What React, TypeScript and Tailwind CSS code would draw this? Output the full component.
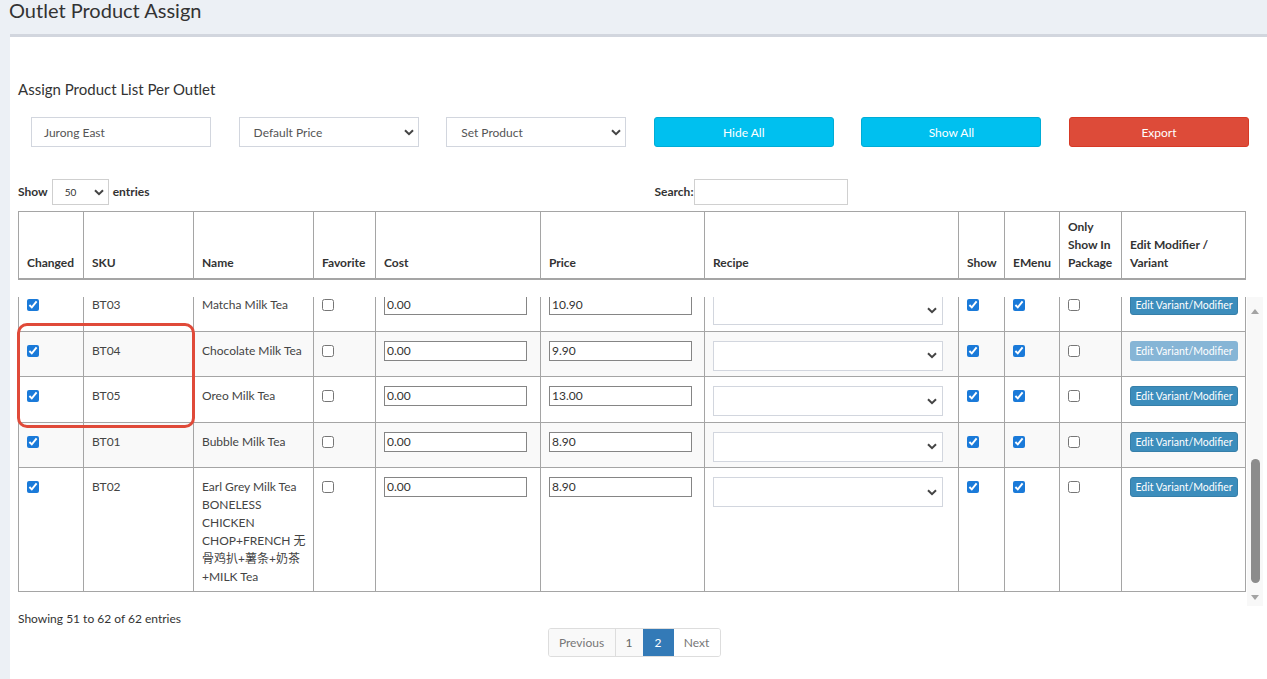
import React from 'react'

const cols =
  'grid grid-cols-[65px_110px_120px_62px_165px_164px_254px_46px_55px_62px_124px]'

const heads = ['Changed', 'SKU', 'Name', 'Favorite', 'Cost', 'Price', 'Recipe', 'Show', 'EMenu', 'Only Show In Package', 'Edit Modifier / Variant']

const rows = [
  { sku: 'BT03', name: ['Matcha Milk Tea'], price: '10.90', stripe: false, dim: false },
  { sku: 'BT04', name: ['Chocolate Milk Tea'], price: '9.90', stripe: true, dim: true },
  { sku: 'BT05', name: ['Oreo Milk Tea'], price: '13.00', stripe: false, dim: false },
  { sku: 'BT01', name: ['Bubble Milk Tea'], price: '8.90', stripe: true, dim: false },
  {
    sku: 'BT02',
    name: ['Earl Grey Milk Tea', 'BONELESS', 'CHICKEN', 'CHOP+FRENCH 无', '骨鸡扒+薯条+奶茶', '+MILK Tea'],
    price: '8.90',
    stripe: false,
    dim: false,
  },
]

function Chevron({ className = '' }: { className?: string }) {
  return (
    <svg viewBox="0 0 10 7" className={`h-[7px] w-[10px] ${className}`}>
      <path d="M1 1.2l4 4 4-4" fill="none" stroke="#444" strokeWidth="2" />
    </svg>
  )
}

function Box({ checked }: { checked: boolean }) {
  return (
    <div className="flex h-[18px] items-center">
      <input type="checkbox" defaultChecked={checked} className="m-0 h-[12px] w-[12px] accent-[#1a7ad9]" />
    </div>
  )
}

function Cell({ children, className = '' }: { children?: React.ReactNode; className?: string }) {
  return <div className={`border-b border-r border-[#a5a5a5] px-[8px] pb-[5px] pt-[10px] ${className}`}>{children}</div>
}

export default function App() {
  return (
    <div className="flex min-h-screen flex-col bg-[#ecf0f5] font-['Lato','Noto_Sans_CJK_SC',sans-serif] text-[12px] text-[#333]">
      <div className="h-[34px] pl-[9px] text-[20px] leading-[20px] text-[#333]">Outlet Product Assign</div>

      <div className="ml-[10px] flex-1 border-t-[3px] border-[#d2d6de] bg-white pl-[8px]">
        <div className="pt-[42px] text-[15px] leading-[20px] text-[#333]">Assign Product List Per Outlet</div>

        <div className="ml-[13px] mt-[18px] grid grid-cols-[repeat(6,180px)] gap-x-[27.6px]">
          <div className="flex h-[30px] items-center border border-[#d2d6de] px-[12px] pt-[1px] text-[#555]">Jurong East</div>
          <div className="flex h-[30px] items-center justify-between border border-[#d2d6de] pl-[14px] pr-[4px] pt-[1px] text-[#555]">
            Default Price
            <Chevron />
          </div>
          <div className="flex h-[30px] items-center justify-between border border-[#d2d6de] pl-[14px] pr-[4px] pt-[1px] text-[#555]">
            Set Product
            <Chevron />
          </div>
          <button className="h-[30px] rounded-[3px] border border-[#00acd6] bg-[#00c0ef] pt-[1px] text-white">Hide All</button>
          <button className="h-[30px] rounded-[3px] border border-[#00acd6] bg-[#00c0ef] pt-[1px] text-white">Show All</button>
          <button className="h-[30px] rounded-[3px] border border-[#d73925] bg-[#dd4b39] pt-[1px] text-white">Export</button>
        </div>

        <div className="mt-[32px] flex h-[26px] items-center font-bold">
          <span>Show</span>
          <div className="ml-[4px] flex h-[26px] w-[57px] items-center justify-between border border-[#cfcfcf] pl-[12px] pr-[4px] text-[10px] font-normal">
            50
            <Chevron />
          </div>
          <span className="ml-[4px]">entries</span>
          <span className="ml-[505px]">Search:</span>
          <div className="ml-[1px] h-[26px] w-[154px] border border-[#d0d0d0]" />
        </div>

        <div className={`${cols} mt-[6px] w-[1228px] border-l border-t border-[#a5a5a5] font-bold leading-[18px]`}>
          {heads.map((h) => (
            <div key={h} className="flex flex-col justify-end border-b-2 border-r border-[#a5a5a5] px-[8px] pb-[6px] pt-[6px]">
              {h}
            </div>
          ))}
        </div>

        <div className="relative mt-[17px] flex items-start">
          <div className="flex h-[295px] w-[1228px] flex-col justify-end overflow-hidden border-l border-[#a5a5a5] leading-[18px] text-[#444]">
            {rows.map((r, i) => (
              <div key={r.sku} className={`${cols} shrink-0 ${i < 4 ? 'h-[45.5px]' : ''} ${r.stripe ? 'bg-[#f9f9f9]' : 'bg-white'}`}>
                <Cell>
                  <Box checked />
                </Cell>
                <Cell>{r.sku}</Cell>
                <Cell>
                  {r.name.map((n) => (
                    <div key={n} className="whitespace-nowrap">{n}</div>
                  ))}
                </Cell>
                <Cell>
                  <Box checked={false} />
                </Cell>
                <Cell>
                  <div className="-mt-[1px] flex h-[20px] w-[143px] items-center border border-[#858585] bg-white pl-[2px] text-[#333]">0.00</div>
                </Cell>
                <Cell>
                  <div className="-mt-[1px] flex h-[20px] w-[143px] items-center border border-[#858585] bg-white pl-[2px] text-[#333]">{r.price}</div>
                </Cell>
                <Cell>
                  <div className="-mt-[1px] flex h-[30px] w-[230px] items-center justify-end border border-[#d2d6de] bg-white pr-[5px]">
                    <Chevron />
                  </div>
                </Cell>
                <Cell>
                  <Box checked />
                </Cell>
                <Cell>
                  <Box checked />
                </Cell>
                <Cell>
                  <Box checked={false} />
                </Cell>
                <Cell>
                  <button
                    className={`-mt-[2px] h-[20px] w-[108px] rounded-[3px] text-[10.5px] leading-[18px] text-white ${
                      r.dim ? 'bg-[#86b5d6]' : 'border border-[#367fa9] bg-[#3c8dbc]'
                    }`}
                  >
                    Edit Variant/Modifier
                  </button>
                </Cell>
              </div>
            ))}
          </div>

          <div className="ml-[1px] flex h-[309px] w-[16px] flex-col items-center bg-[#f8f8f8]">
            <svg viewBox="0 0 8 5" className="mt-[12px] h-[5px] w-[8px]">
              <path d="M0 5L4 0L8 5Z" fill="#a3a3a3" />
            </svg>
            <div className="mt-[145px] h-[124px] w-[9px] rounded-full bg-[#8c8c8c]" />
            <svg viewBox="0 0 8 5" className="mt-[12px] h-[5px] w-[8px]">
              <path d="M0 0L4 5L8 0Z" fill="#a3a3a3" />
            </svg>
          </div>

          <div className="pointer-events-none absolute left-[-1px] top-[26px] h-[105px] w-[178px] rounded-[10px] border-[3px] border-[#e04a39]" />
        </div>

        <div className="mt-[4px] leading-[18px]">Showing 51 to 62 of 62 entries</div>

        <div className="flex w-[1232px] justify-center">
          <div className="flex h-[29px] overflow-hidden rounded-[3px] border border-[#ddd]">
            <div className="flex w-[66px] items-center justify-center bg-[#f9f9f9] text-[#777]">Previous</div>
            <div className="flex w-[28px] items-center justify-center border-l border-[#ddd] bg-[#f9f9f9] text-[#666]">1</div>
            <div className="flex w-[31px] items-center justify-center bg-[#337ab7] text-white">2</div>
            <div className="flex w-[46px] items-center justify-center bg-white text-[#777]">Next</div>
          </div>
        </div>
      </div>
    </div>
  )
}
